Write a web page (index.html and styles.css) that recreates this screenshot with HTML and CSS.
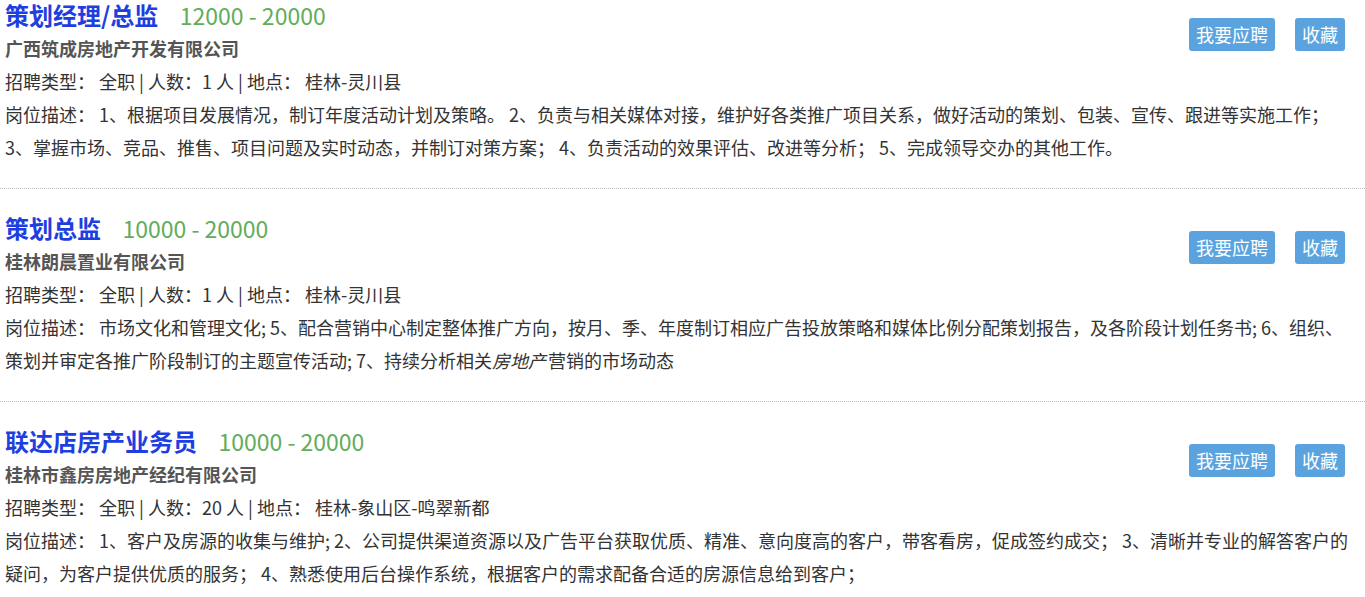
FILE: index.html
```html
<!DOCTYPE html>
<html lang="zh-CN">
<head>
    <meta charset="UTF-8">
    <meta name="viewport" content="width=device-width, initial-scale=1.0">
    <title>职位列表</title>
    <link rel="stylesheet" href="styles.css">
</head>
<body>
    <div class="job-list">
        <div class="job">
            <div class="job-head">
                <div class="job-main">
                    <h2 class="job-title">策划经理/总监 <span class="salary">12000 - 20000</span></h2>
                    <div class="company">广西筑成房地产开发有限公司</div>
                </div>
                <div class="job-actions">
                    <button class="btn">我要应聘</button>
                    <button class="btn">收藏</button>
                </div>
            </div>
            <div class="job-meta">招聘类型： 全职 | 人数：1 人 | 地点： 桂林-灵川县</div>
            <div class="job-desc">岗位描述： 1、根据项目发展情况，制订年度活动计划及策略。 2、负责与相关媒体对接，维护好各类推广项目关系，做好活动的策划、包装、宣传、跟进等实施工作； 3、掌握市场、竞品、推售、项目问题及实时动态，并制订对策方案； 4、负责活动的效果评估、改进等分析； 5、完成领导交办的其他工作。</div>
        </div>

        <div class="job">
            <div class="job-head">
                <div class="job-main">
                    <h2 class="job-title">策划总监 <span class="salary">10000 - 20000</span></h2>
                    <div class="company">桂林朗晨置业有限公司</div>
                </div>
                <div class="job-actions">
                    <button class="btn">我要应聘</button>
                    <button class="btn">收藏</button>
                </div>
            </div>
            <div class="job-meta">招聘类型： 全职 | 人数：1 人 | 地点： 桂林-灵川县</div>
            <div class="job-desc">岗位描述： 市场文化和管理文化; 5、配合营销中心制定整体推广方向，按月、季、年度制订相应广告投放策略和媒体比例分配策划报告，及各阶段计划任务书; 6、组织、策划并审定各推广阶段制订的主题宣传活动; 7、持续分析相关<em>房地产</em>营销的市场动态</div>
        </div>

        <div class="job">
            <div class="job-head">
                <div class="job-main">
                    <h2 class="job-title">联达店房产业务员 <span class="salary">10000 - 20000</span></h2>
                    <div class="company">桂林市鑫房房地产经纪有限公司</div>
                </div>
                <div class="job-actions">
                    <button class="btn">我要应聘</button>
                    <button class="btn">收藏</button>
                </div>
            </div>
            <div class="job-meta">招聘类型： 全职 | 人数：20 人 | 地点： 桂林-象山区-鸣翠新都</div>
            <div class="job-desc">岗位描述： 1、客户及房源的收集与维护; 2、公司提供渠道资源以及广告平台获取优质、精准、意向度高的客户，带客看房，促成签约成交； 3、清晰并专业的解答客户的疑问，为客户提供优质的服务； 4、熟悉使用后台操作系统，根据客户的需求配备合适的房源信息给到客户；</div>
        </div>
    </div>
</body>
</html>
```

FILE: styles.css
```css
body {
    margin: 0;
    background-color: #fff;
    color: #333;
    font-family: "Microsoft YaHei", "Noto Sans CJK SC", "Noto Sans", sans-serif;
    font-size: 18px;
    line-height: 33px;
}

.job {
    padding: 24px 13px 24px 5px;
    border-bottom: 1px dotted #bbb;
}

.job:first-child {
    padding-top: 0;
}

.job-head {
    display: flex;
    justify-content: space-between;
    align-items: flex-start;
}

.job-title {
    margin: 0 0 2px;
    font-size: 24px;
    font-weight: bold;
    line-height: 30px;
    color: #1e3fdf;
    word-spacing: 16px;
}

.salary {
    font-size: 23px;
    font-weight: normal;
    color: #62ad5a;
    word-spacing: 0;
}

.company {
    font-weight: bold;
    color: #555;
}

.job-actions {
    display: flex;
    gap: 20px;
    margin-top: 18px;
    margin-right: 7px;
}

.btn {
    height: 33px;
    padding: 0 7px;
    border: none;
    border-radius: 3px;
    background-color: #5aa3df;
    color: #fff;
    font-family: inherit;
    font-size: 18px;
    line-height: 33px;
    cursor: pointer;
}

.btn:hover {
    background-color: #4a92cf;
}

.job-desc em {
    font-style: italic;
    padding-right: 2px;
}
```
